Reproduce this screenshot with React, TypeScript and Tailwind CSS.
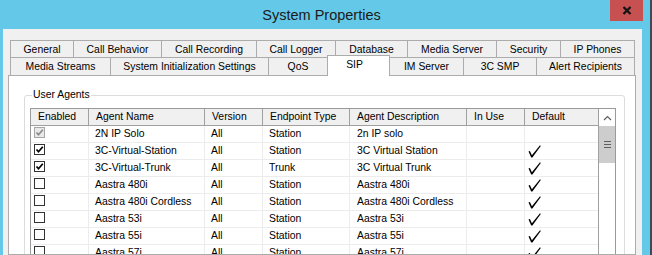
import React from "react";
import clsx from "clsx";

type Tab = { label: string; w: string; active?: boolean };

const topTabs: Tab[] = [
  { label: "General", w: "w-[64px]" },
  { label: "Call Behavior", w: "w-[89px]" },
  { label: "Call Recording", w: "w-[96px]" },
  { label: "Call Logger", w: "w-[80px]" },
  { label: "Database", w: "w-[73px]" },
  { label: "Media Server", w: "w-[90px]" },
  { label: "Security", w: "w-[65px]" },
  { label: "IP Phones", w: "w-[75px]" },
];

const bottomTabs: Tab[] = [
  { label: "Media Streams", w: "w-[101px]" },
  { label: "System Initialization Settings", w: "w-[159px]" },
  { label: "QoS", w: "w-[60px]" },
  { label: "SIP", w: "w-[63px]", active: true },
  { label: "IM Server", w: "w-[75px]" },
  { label: "3C SMP", w: "w-[74px]" },
  { label: "Alert Recipients", w: "w-[99px]" },
];

const columns = [
  { label: "Enabled", w: "w-[58px] border-r" },
  { label: "Agent Name", w: "w-[116px] border-r" },
  { label: "Version", w: "w-[58px] border-r" },
  { label: "Endpoint Type", w: "w-[87px] border-r" },
  { label: "Agent Description", w: "w-[117px] border-r" },
  { label: "In Use", w: "w-[58px] border-r" },
  { label: "Default", w: "w-[73px]" },
];

type Agent = {
  enabled: "on" | "off" | "disabled";
  name: string;
  version: string;
  type: string;
  desc: string;
  isDefault: boolean;
};

const agents: Agent[] = [
  { enabled: "disabled", name: "2N IP Solo", version: "All", type: "Station", desc: "2n IP solo", isDefault: false },
  { enabled: "on", name: "3C-Virtual-Station", version: "All", type: "Station", desc: "3C Virtual Station", isDefault: true },
  { enabled: "on", name: "3C-Virtual-Trunk", version: "All", type: "Trunk", desc: "3C Virtual Trunk", isDefault: true },
  { enabled: "off", name: "Aastra 480i", version: "All", type: "Station", desc: "Aastra 480i", isDefault: true },
  { enabled: "off", name: "Aastra 480i Cordless", version: "All", type: "Station", desc: "Aastra 480i Cordless", isDefault: true },
  { enabled: "off", name: "Aastra 53i", version: "All", type: "Station", desc: "Aastra 53i", isDefault: true },
  { enabled: "off", name: "Aastra 55i", version: "All", type: "Station", desc: "Aastra 55i", isDefault: true },
  { enabled: "off", name: "Aastra 57i", version: "All", type: "Station", desc: "Aastra 57i", isDefault: true },
];

// small checkbox in the Enabled column
const CheckBox: React.FC<{ state: Agent["enabled"] }> = ({ state }) => (
  <span
    className={clsx(
      "mt-[1px] ml-[3px] w-[11px] h-[11px] border flex items-center justify-center",
      state === "disabled" ? "border-[#a6a6a6] bg-[#e9e9e9]" : "border-[#333333] bg-white"
    )}
  >
    {state !== "off" && (
      <svg width="9" height="9" viewBox="0 0 9 9">
        <polyline
          points="1.5,4.5 3.5,6.8 7.8,1.8"
          fill="none"
          stroke={state === "disabled" ? "#8a8a8a" : "#000"}
          strokeWidth="1.7"
        />
      </svg>
    )}
  </span>
);

// the "default" tick
const Tick = () => (
  <svg width="13" height="13" viewBox="0 0 13 13" className="ml-[3px] mt-[2px]">
    <polygon points="0.5,6.6 1.9,6.1 3.9,10.2 12,0.3 12.8,0.9 4.4,12.6 3.2,12.6" fill="#000" />
  </svg>
);

export default function App() {
  return (
    <div className="w-[652px] h-[255px] overflow-hidden flex font-['Liberation_Sans',Arial,sans-serif] text-black">
      <div className="w-[650px] flex flex-col">
        {/* title bar */}
        <div className="h-[29px] shrink-0 flex bg-[#64c8e9]">
          <div className="flex-1" />
          <div className="self-center text-[14.5px] leading-[18px] text-[#1b1b1b]">System Properties</div>
          <div className="flex-1 flex justify-end items-start pr-[7px]">
            <div className="w-[33px] h-[21px] bg-[#c75050] flex items-center justify-center">
              <svg width="10" height="9" viewBox="0 0 10 9">
                <path d="M1.5 1 L8.5 8 M8.5 1 L1.5 8" stroke="#141414" strokeWidth="2.3" />
              </svg>
            </div>
          </div>
        </div>

        <div className="flex-1 flex min-h-0">
          <div className="w-[3px] bg-[#64c8e9]" />

          {/* client area */}
          <div className="flex-1 flex flex-col bg-[#f0f0f0] pt-[11px] pl-[5px] pr-[6px] text-[10.4px]">
            <div className="flex ml-[2px] h-[17px]">
              {topTabs.map((t, i) => (
                <div
                  key={t.label}
                  className={clsx(
                    "h-[17px] border-t border-l border-r border-[#acacac] bg-[#f0f0f0] flex items-center justify-center leading-[14px] pt-[1px]",
                    t.w,
                    i > 0 && "-ml-px"
                  )}
                >
                  {t.label}
                </div>
              ))}
            </div>
            <div className="flex ml-[2px] h-[18px]">
              {bottomTabs.map((t, i) =>
                t.active ? (
                  <div
                    key={t.label}
                    className={clsx(
                      "relative z-10 h-[21px] -mt-[2px] border-t border-l border-r border-[#acacac] bg-white flex items-center justify-center leading-[14px] pr-[8px] pb-[2px]",
                      t.w,
                      i > 0 && "-ml-px"
                    )}
                  >
                    {t.label}
                  </div>
                ) : (
                  <div
                    key={t.label}
                    className={clsx(
                      "h-[18px] border-t border-l border-r border-[#acacac] bg-[#f0f0f0] flex items-center justify-center leading-[14px] pt-[1px]",
                      t.w,
                      i > 0 && "-ml-px"
                    )}
                  >
                    {t.label}
                  </div>
                )
              )}
            </div>

            {/* tab page */}
            <div className="flex-1 min-h-0 border border-[#acacac] bg-white overflow-hidden">
              <fieldset className="mt-[13px] ml-[15px] w-[601px] border border-[#dcdcdc] rounded-[3px] pl-[5px] pt-[7px]">
                <legend className="ml-[2px] px-[1px] leading-[12px]">User Agents</legend>

                {/* grid */}
                <div className="w-[586px] flex border-t border-l border-r border-[#9a9a9a] h-[200px]">
                  <div className="w-[567px] flex flex-col">
                    <div className="h-[17px] flex bg-[#f0f0f0] border-b border-[#a0a0a0]">
                      {columns.map((c) => (
                        <div key={c.label} className={clsx("h-full border-[#a0a0a0] pl-[7px] flex items-center leading-[14px]", c.w)}>
                          {c.label}
                        </div>
                      ))}
                    </div>
                    {agents.map((a) => (
                      <div key={a.name} className="h-[17px] shrink-0 flex border-b border-[#ececec]">
                        <div className="w-[58px] border-r border-[#ececec] flex items-start">
                          <CheckBox state={a.enabled} />
                        </div>
                        <div className="w-[116px] border-r border-[#ececec] pl-[6px] flex items-center whitespace-nowrap">{a.name}</div>
                        <div className="w-[58px] border-r border-[#ececec] pl-[6px] flex items-center">{a.version}</div>
                        <div className="w-[87px] border-r border-[#ececec] pl-[6px] flex items-center">{a.type}</div>
                        <div className="w-[117px] border-r border-[#ececec] pl-[7px] flex items-center whitespace-nowrap">{a.desc}</div>
                        <div className="w-[58px] border-r border-[#ececec]" />
                        <div className="w-[73px] flex items-start">{a.isDefault && <Tick />}</div>
                      </div>
                    ))}
                  </div>

                  {/* vertical scrollbar */}
                  <div className="w-[17px] flex flex-col border-l border-[#a0a0a0] bg-white">
                    <div className="h-[17px] flex items-center justify-center">
                      <svg width="9" height="6" viewBox="0 0 9 6">
                        <path d="M1 5 L4.5 1.5 L8 5" fill="none" stroke="#606060" strokeWidth="1.2" />
                      </svg>
                    </div>
                    <div className="h-[37px] bg-[#cdcdcd] flex flex-col items-center justify-center gap-[2px]">
                      <div className="w-[7px] h-px bg-[#5f5f5f]" />
                      <div className="w-[7px] h-px bg-[#5f5f5f]" />
                      <div className="w-[7px] h-px bg-[#5f5f5f]" />
                    </div>
                    <div className="flex-1" />
                  </div>
                </div>
              </fieldset>
            </div>
          </div>

          <div className="w-[8px] bg-[#64c8e9]" />
        </div>
      </div>
      <div className="w-[2px] bg-[#3b4a55]" />
    </div>
  );
}
